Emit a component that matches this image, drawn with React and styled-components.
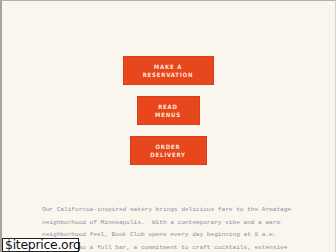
import React from "react";
import styled, { createGlobalStyle } from "styled-components";

const GlobalStyle = createGlobalStyle`
  html, body {
    margin: 0;
    padding: 0;
    background: #fbf6ed;
  }
`;

const Page = styled.div`
  position: relative;
  box-sizing: border-box;
  width: 336px;
  height: 252px;
  overflow: hidden;
  background: #fbf6ed;
  border-left: 2px solid #a7a39a;
  border-top: 1px solid #b4b0a8;
  border-right: 1px solid #d8d3ca;
  padding-top: 55px;
  display: flex;
  flex-direction: column;
  align-items: center;
`;

const Actions = styled.div`
  display: flex;
  flex-direction: column;
  align-items: center;
  gap: 11px;
  margin-left: -1px;
`;

const ActionButton = styled.a`
  box-sizing: border-box;
  display: flex;
  align-items: center;
  justify-content: center;
  width: ${props => props.width}px;
  height: 29px;
  background: #e8461c;
  border: 1px solid #d8401a;
  color: #fde6da;
  font-family: "Liberation Sans Narrow", "DejaVu Sans Condensed", "Liberation Sans", sans-serif;
  font-stretch: condensed;
  font-weight: 700;
  font-size: 6px;
  line-height: 7.5px;
  letter-spacing: 0.8px;
  text-transform: uppercase;
  text-align: center;
  text-decoration: none;
`;

const Intro = styled.p`
  margin: 39px 0 0 0;
  align-self: flex-start;
  padding-left: 40px;
  font-family: "Liberation Mono", "Courier New", monospace;
  font-size: 6.2px;
  letter-spacing: -0.05px;
  line-height: 12.7px;
  color: #918ea3;
  white-space: nowrap;
`;

const Badge = styled.div`
  position: absolute;
  left: 0;
  bottom: 0;
  box-sizing: border-box;
  width: 77px;
  height: 14px;
  background: #ffffff;
  border: 1px solid #222;
  color: #111;
  font-family: "DejaVu Sans", sans-serif;
  font-size: 12.5px;
  line-height: 12px;
  padding-left: 2px;
  letter-spacing: -0.3px;
`;

const actions = [
  { label: ["Make a", "Reservation"], width: 91 },
  { label: ["Read", "Menus"], width: 63 },
  { label: ["Order", "Delivery"], width: 77 },
];

const lines = [
  "Our California-inspired eatery brings delicious fare to the Armatage",
  "neighborhood of Minneapolis.  With a contemporary vibe and a warm",
  "neighborhood feel, Book Club opens every day beginning at 8 a.m.",
  "There's also a full bar, a commitment to craft cocktails, extensive",
];

const App = () => {
  return (
    <>
      <GlobalStyle />
      <Page>
        <Actions>
          {actions.map(item => (
            <ActionButton key={item.label[1]} href="#" width={item.width}>
              <span>
                {item.label[0]}
                <br />
                {item.label[1]}
              </span>
            </ActionButton>
          ))}
        </Actions>
        <Intro>
          {lines.map(line => (
            <React.Fragment key={line}>
              {line.replace(/  /g, "\u00a0 ")}
              <br />
            </React.Fragment>
          ))}
        </Intro>
        <Badge>$iteprice.org</Badge>
      </Page>
    </>
  );
};

export default App;
